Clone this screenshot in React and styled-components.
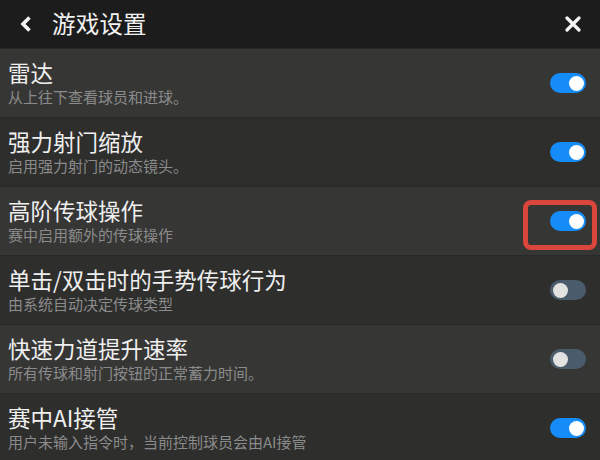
import React, { useState } from 'react'
import styled, { createGlobalStyle } from 'styled-components'

const GlobalStyle = createGlobalStyle`
  html, body {
    margin: 0;
    padding: 0;
    background: #2f2f2f;
    font-family: "Noto Sans CJK SC", "Noto Sans", sans-serif;
  }
`

const Screen = styled.div`
  width: 600px;
  height: 460px;
  overflow: hidden;
  display: flex;
  flex-direction: column;
  background: #2f2f2f;
`

const Header = styled.div`
  height: 48px;
  flex: none;
  display: flex;
  align-items: center;
  padding: 0 18px 0 17px;
  background: #1c1c1c;
  color: #f2f2f2;
`

const IconButton = styled.button`
  border: 0;
  background: none;
  padding: 0;
  display: flex;
  align-items: center;
  justify-content: center;
  width: ${(p) => p.size}px;
  height: ${(p) => p.size}px;
  color: #f4f4f4;
`

const Title = styled.h1`
  margin: 0 0 0 17px;
  flex: 1;
  font-size: 23.5px;
  font-weight: 400;
  line-height: 30px;
  letter-spacing: 0.2px;
  padding-bottom: 3px;
`

const List = styled.div`
  display: flex;
  flex-direction: column;
`

const Row = styled.div`
  height: 69px;
  box-sizing: border-box;
  display: flex;
  align-items: center;
  padding: 0 14px 0 8px;
  background: ${(p) => (p.$alt ? '#2e2e2d' : '#363635')};
  border-top: 1px solid #282828;
`

const Texts = styled.div`
  flex: 1;
  min-width: 0;
  display: flex;
  flex-direction: column;
  padding-bottom: 2px;
`

const Label = styled.div`
  font-size: 22.5px;
  line-height: 27px;
  color: #efefef;
  white-space: nowrap;
`

const Hint = styled.div`
  margin-top: 2px;
  font-size: 15px;
  line-height: 18px;
  color: #8b8b8b;
  white-space: nowrap;
`

const SwitchWrap = styled.div`
  position: relative;
  flex: none;
  width: 36px;
  height: 20px;
  margin-left: 8px;
`

const Track = styled.button`
  width: 36px;
  height: 20px;
  border: 0;
  padding: 0;
  border-radius: 10px;
  background: ${(p) => (p.$on ? '#168cf8' : '#4a5b6b')};
  position: relative;
  cursor: pointer;
`

const Knob = styled.span`
  position: absolute;
  top: 2.5px;
  left: ${(p) => (p.$on ? '18.5px' : '2.5px')};
  width: 15px;
  height: 15px;
  border-radius: 50%;
  background: ${(p) => (p.$on ? '#ffffff' : '#e2e2e0')};
`

const Highlight = styled.div`
  position: absolute;
  left: -27px;
  top: -11px;
  width: 64px;
  height: 40px;
  border: 5px solid #d8463c;
  border-radius: 8px;
  pointer-events: none;
`

const settings = [
  { label: '雷达', hint: '从上往下查看球员和进球。', on: true },
  { label: '强力射门缩放', hint: '启用强力射门的动态镜头。', on: true },
  { label: '高阶传球操作', hint: '赛中启用额外的传球操作', on: true, marked: true },
  { label: '单击/双击时的手势传球行为', hint: '由系统自动决定传球类型', on: false },
  { label: '快速力道提升速率', hint: '所有传球和射门按钮的正常蓄力时间。', on: false },
  { label: '赛中AI接管', hint: '用户未输入指令时，当前控制球员会由AI接管', on: true },
]

const Toggle = ({ on, marked, onClick }) => (
  <SwitchWrap>
    <Track $on={on} onClick={onClick}>
      <Knob $on={on} />
    </Track>
    {marked && <Highlight />}
  </SwitchWrap>
)

export default function App() {
  const [values, setValues] = useState(settings.map((s) => s.on))

  const flip = (i) =>
    setValues((v) => v.map((x, j) => (j === i ? !x : x)))

  return (
    <Screen>
      <GlobalStyle />
      <Header>
        <IconButton size={18}>
          <svg width="14" height="18" viewBox="0 0 14 18">
            <path d="M10.5 2.5 L4 9 L10.5 15.5" fill="none" stroke="currentColor" strokeWidth="3.6" strokeLinejoin="miter" />
          </svg>
        </IconButton>
        <Title>游戏设置</Title>
        <IconButton size={18}>
          <svg width="16" height="16" viewBox="0 0 16 16">
            <path d="M2 2 L14 14 M14 2 L2 14" stroke="currentColor" strokeWidth="3.2" strokeLinecap="round" />
          </svg>
        </IconButton>
      </Header>
      <List>
        {settings.map((s, i) => (
          <Row key={s.label} $alt={i % 2 === 1}>
            <Texts>
              <Label>{s.label}</Label>
              <Hint>{s.hint}</Hint>
            </Texts>
            <Toggle on={values[i]} marked={s.marked} onClick={() => flip(i)} />
          </Row>
        ))}
      </List>
    </Screen>
  )
}
